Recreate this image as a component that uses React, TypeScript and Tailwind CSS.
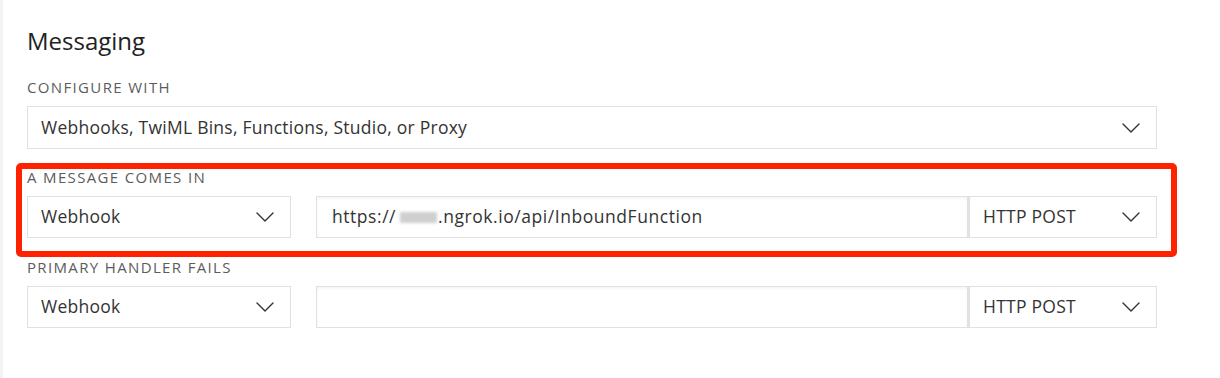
import React from "react";

const Chevron = () => (
  <svg width="18" height="10" viewBox="0 0 18 10" fill="none" className="shrink-0">
    <path d="M1 1l8 8 8-8" stroke="#333" strokeWidth="1.4" strokeLinecap="round" strokeLinejoin="round" />
  </svg>
);

const Select = ({ text, className }: { text: string; className: string }) => (
  <div className={`flex items-center justify-between border border-[#e1e1e1] bg-white pl-[13px] pr-[16px] ${className}`}>
    <span className="text-[17.5px] leading-none tracking-[0.25px] text-[#333]">{text}</span>
    <Chevron />
  </div>
);

const Label = ({ children, className }: { children: React.ReactNode; className?: string }) => (
  <div className={`text-[15px] uppercase tracking-[0.09em] text-[#5c5c5c] leading-none ${className ?? ""}`}>{children}</div>
);

export default function App() {
  return (
    <div className="flex h-[378px] w-[1220px] bg-white" style={{ fontFamily: "'Open Sans', Lato, sans-serif" }}>
      <div className="w-[3px] bg-[#f3f3f3]" />
      <div className="flex w-[1154px] flex-col pl-[24px] pt-[29px]">
        <h2 className="text-[24px] leading-none text-[#222]">Messaging</h2>
        <Label className="mt-[27px]">Configure with</Label>
        <Select text="Webhooks, TwiML Bins, Functions, Studio, or Proxy" className="mt-[11px] h-[43px] w-[1130px]" />

        <div className="relative mt-[21px]">
          <div className="pointer-events-none absolute -left-[11px] -right-[20px] -top-[7px] -bottom-[19px] rounded-[5px] border-[6px] border-[#ff2200]" />
          <Label>A message comes in</Label>
          <div className="mt-[11px] flex">
            <Select text="Webhook" className="h-[42px] w-[264px]" />
            <div className="ml-[25px] flex h-[42px] w-[652px] items-center border border-[#e1e1e1] bg-white pl-[15px] shadow-[inset_0_2px_3px_rgba(0,0,0,0.04)]">
              <span className="flex items-center text-[17.5px] leading-none tracking-[0.55px] text-[#333]">
                https://
                <span className="ml-[4px] mr-[1px] inline-block h-[11px] w-[37px] bg-[#cfcfcf] blur-[1.5px]" />
                .ngrok.io/api/InboundFunction
              </span>
            </div>
            <Select text="HTTP POST" className="h-[42px] w-[189px] border-l-2" />
          </div>
        </div>

        <Label className="mt-[22px]">Primary handler fails</Label>
        <div className="mt-[11px] flex">
          <Select text="Webhook" className="h-[42px] w-[264px]" />
          <div className="ml-[25px] h-[42px] w-[652px] border border-[#e1e1e1] bg-white shadow-[inset_0_2px_3px_rgba(0,0,0,0.04)]" />
          <Select text="HTTP POST" className="h-[42px] w-[189px] border-l-2" />
        </div>
      </div>
    </div>
  );
}
